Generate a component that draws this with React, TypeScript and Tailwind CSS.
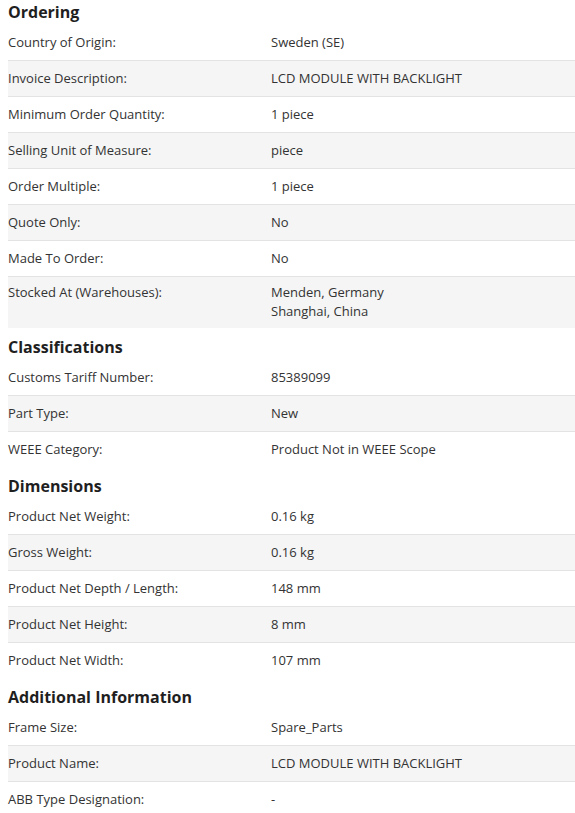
type Row = { label: string; value: string[] };
type Section = { title: string; rows: Row[] };

const sections: Section[] = [
  {
    title: 'Ordering',
    rows: [
      { label: 'Country of Origin:', value: ['Sweden (SE)'] },
      { label: 'Invoice Description:', value: ['LCD MODULE WITH BACKLIGHT'] },
      { label: 'Minimum Order Quantity:', value: ['1 piece'] },
      { label: 'Selling Unit of Measure:', value: ['piece'] },
      { label: 'Order Multiple:', value: ['1 piece'] },
      { label: 'Quote Only:', value: ['No'] },
      { label: 'Made To Order:', value: ['No'] },
      { label: 'Stocked At (Warehouses):', value: ['Menden, Germany', 'Shanghai, China'] },
    ],
  },
  {
    title: 'Classifications',
    rows: [
      { label: 'Customs Tariff Number:', value: ['85389099'] },
      { label: 'Part Type:', value: ['New'] },
      { label: 'WEEE Category:', value: ['Product Not in WEEE Scope'] },
    ],
  },
  {
    title: 'Dimensions',
    rows: [
      { label: 'Product Net Weight:', value: ['0.16 kg'] },
      { label: 'Gross Weight:', value: ['0.16 kg'] },
      { label: 'Product Net Depth / Length:', value: ['148 mm'] },
      { label: 'Product Net Height:', value: ['8 mm'] },
      { label: 'Product Net Width:', value: ['107 mm'] },
    ],
  },
  {
    title: 'Additional Information',
    rows: [
      { label: 'Frame Size:', value: ['Spare_Parts'] },
      { label: 'Product Name:', value: ['LCD MODULE WITH BACKLIGHT'] },
      { label: 'ABB Type Designation:', value: ['-'] },
    ],
  },
];

export default function App() {
  return (
    <div className="h-[813px] overflow-hidden bg-white font-['Open_Sans',sans-serif] text-[#333]">
      <div className="-mt-[7px] pl-2">
        {sections.map((section) => (
          <div key={section.title}>
            <h2 className="h-[31px] pt-2 text-[16px] leading-[22px] font-bold text-[#1f1f1f]">
              {section.title}
            </h2>
            {section.rows.map((row, i) => (
              <div
                key={row.label}
                className={`grid grid-cols-[263px_1fr] text-[13px] leading-[19px] ${
                  i % 2 === 1 ? 'bg-[#f5f5f5]' : 'bg-white'
                } ${i > 0 ? 'border-t border-[#e3e3e3]' : ''} ${
                  row.value.length > 1 ? 'pt-[6px] pb-[7px]' : 'h-9 items-center'
                }`}
              >
                <div>{row.label}</div>
                <div>
                  {row.value.map((v) => (
                    <div key={v}>{v}</div>
                  ))}
                </div>
              </div>
            ))}
          </div>
        ))}
      </div>
    </div>
  );
}
